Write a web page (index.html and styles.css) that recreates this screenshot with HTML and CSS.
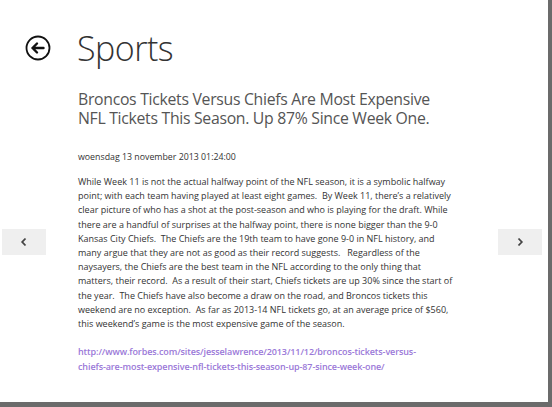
FILE: index.html
```html
<!DOCTYPE html>
<html>
<head>
<meta charset="utf-8">
<link rel="stylesheet" href="styles.css">
</head>
<body>
<div class="frame">
  <header class="header">
    <button class="back" aria-label="Back">
      <svg width="26" height="26" viewBox="0 0 26 26">
        <circle cx="13" cy="13" r="11.5" fill="none" stroke="#111" stroke-width="1.8"/>
        <path d="M7.5 13 H18.5 M12 8.5 L7.5 13 L12 17.5" fill="none" stroke="#111" stroke-width="2.4" stroke-linecap="round" stroke-linejoin="round"/>
      </svg>
    </button>
    <h1 class="title">Sports</h1>
  </header>
  <main class="article">
    <h2 class="headline">Broncos Tickets Versus Chiefs Are Most Expensive<br>NFL Tickets This Season. Up 87% Since Week One.</h2>
    <div class="date">woensdag 13 november 2013 01:24:00</div>
    <p class="body">While Week 11 is not the actual halfway point of the NFL season, it is a symbolic halfway<br>point; with each team having played at least eight games.&nbsp; By Week 11, there’s a relatively<br>clear picture of who has a shot at the post-season and who is playing for the draft. While<br>there are a handful of surprises at the halfway point, there is none bigger than the 9-0<br>Kansas City Chiefs.&nbsp; The Chiefs are the 19th team to have gone 9-0 in NFL history, and<br>many argue that they are not as good as their record suggests.&nbsp;&nbsp; Regardless of the<br>naysayers, the Chiefs are the best team in the NFL according to the only thing that<br>matters, their record.&nbsp; As a result of their start, Chiefs tickets are up 30% since the start of<br>the year.&nbsp; The Chiefs have also become a draw on the road, and Broncos tickets this<br>weekend are no exception.&nbsp; As far as 2013-14 NFL tickets go, at an average price of $560,<br>this weekend’s game is the most expensive game of the season.</p>
    <a class="link" href="#">http://www.forbes.com/sites/jesselawrence/2013/11/12/broncos-tickets-versus-<br>chiefs-are-most-expensive-nfl-tickets-this-season-up-87-since-week-one/</a>
  </main>
  <button class="flip flip-prev" aria-label="Previous">
    <svg width="8" height="10" viewBox="0 0 8 10"><path d="M5.5 1.5 L2.2 5 L5.5 8.5" fill="none" stroke="#444" stroke-width="1.8"/></svg>
  </button>
  <button class="flip flip-next" aria-label="Next">
    <svg width="8" height="10" viewBox="0 0 8 10"><path d="M2.5 1.5 L5.8 5 L2.5 8.5" fill="none" stroke="#444" stroke-width="1.8"/></svg>
  </button>
</div>
</body>
</html>
```
FILE: styles.css
```css
html, body {
  margin: 0;
  padding: 0;
  background: #fff;
}
body {
  width: 552px;
  height: 407px;
  overflow: hidden;
  font-family: "Open Sans", "Noto Sans", sans-serif;
}
.frame {
  position: relative;
  box-sizing: border-box;
  width: 552px;
  height: 407px;
  background: #fff;
  border-right: 4px solid #6b6b6b;
  border-bottom: 5px solid #6b6b6b;
  padding: 28px 0 0 25px;
}
.header {
  display: flex;
  align-items: center;
  gap: 26px;
}
.back {
  width: 26px;
  height: 26px;
  padding: 0;
  border: 0;
  background: none;
  display: flex;
}
.title {
  margin: 0;
  font-size: 34px;
  font-weight: 300;
  letter-spacing: -0.5px;
  color: #333;
  line-height: 40px;
}
.article {
  padding-left: 53px;
}
.headline {
  margin: 22px 0 0;
  font-size: 15.8px;
  font-weight: 400;
  letter-spacing: -0.3px;
  line-height: 19px;
  color: #555;
}
.date {
  margin-top: 22px;
  font-size: 8.8px;
  color: #333;
  line-height: 14px;
}
.body {
  margin: 11px 0 0;
  font-size: 9px;
  line-height: 14.2px;
  color: #333;
  white-space: nowrap;
}
.link {
  display: block;
  margin-top: 13px;
  font-size: 9px;
  line-height: 15px;
  font-weight: 600;
  letter-spacing: -0.1px;
  color: #9a78d8;
  text-decoration: none;
}
.flip {
  position: absolute;
  top: 229px;
  width: 44px;
  height: 26px;
  padding: 0;
  border: 0;
  background: #efefef;
  display: flex;
  align-items: center;
  justify-content: center;
}
.flip-prev { left: 2px; }
.flip-next { left: 498px; }
```
